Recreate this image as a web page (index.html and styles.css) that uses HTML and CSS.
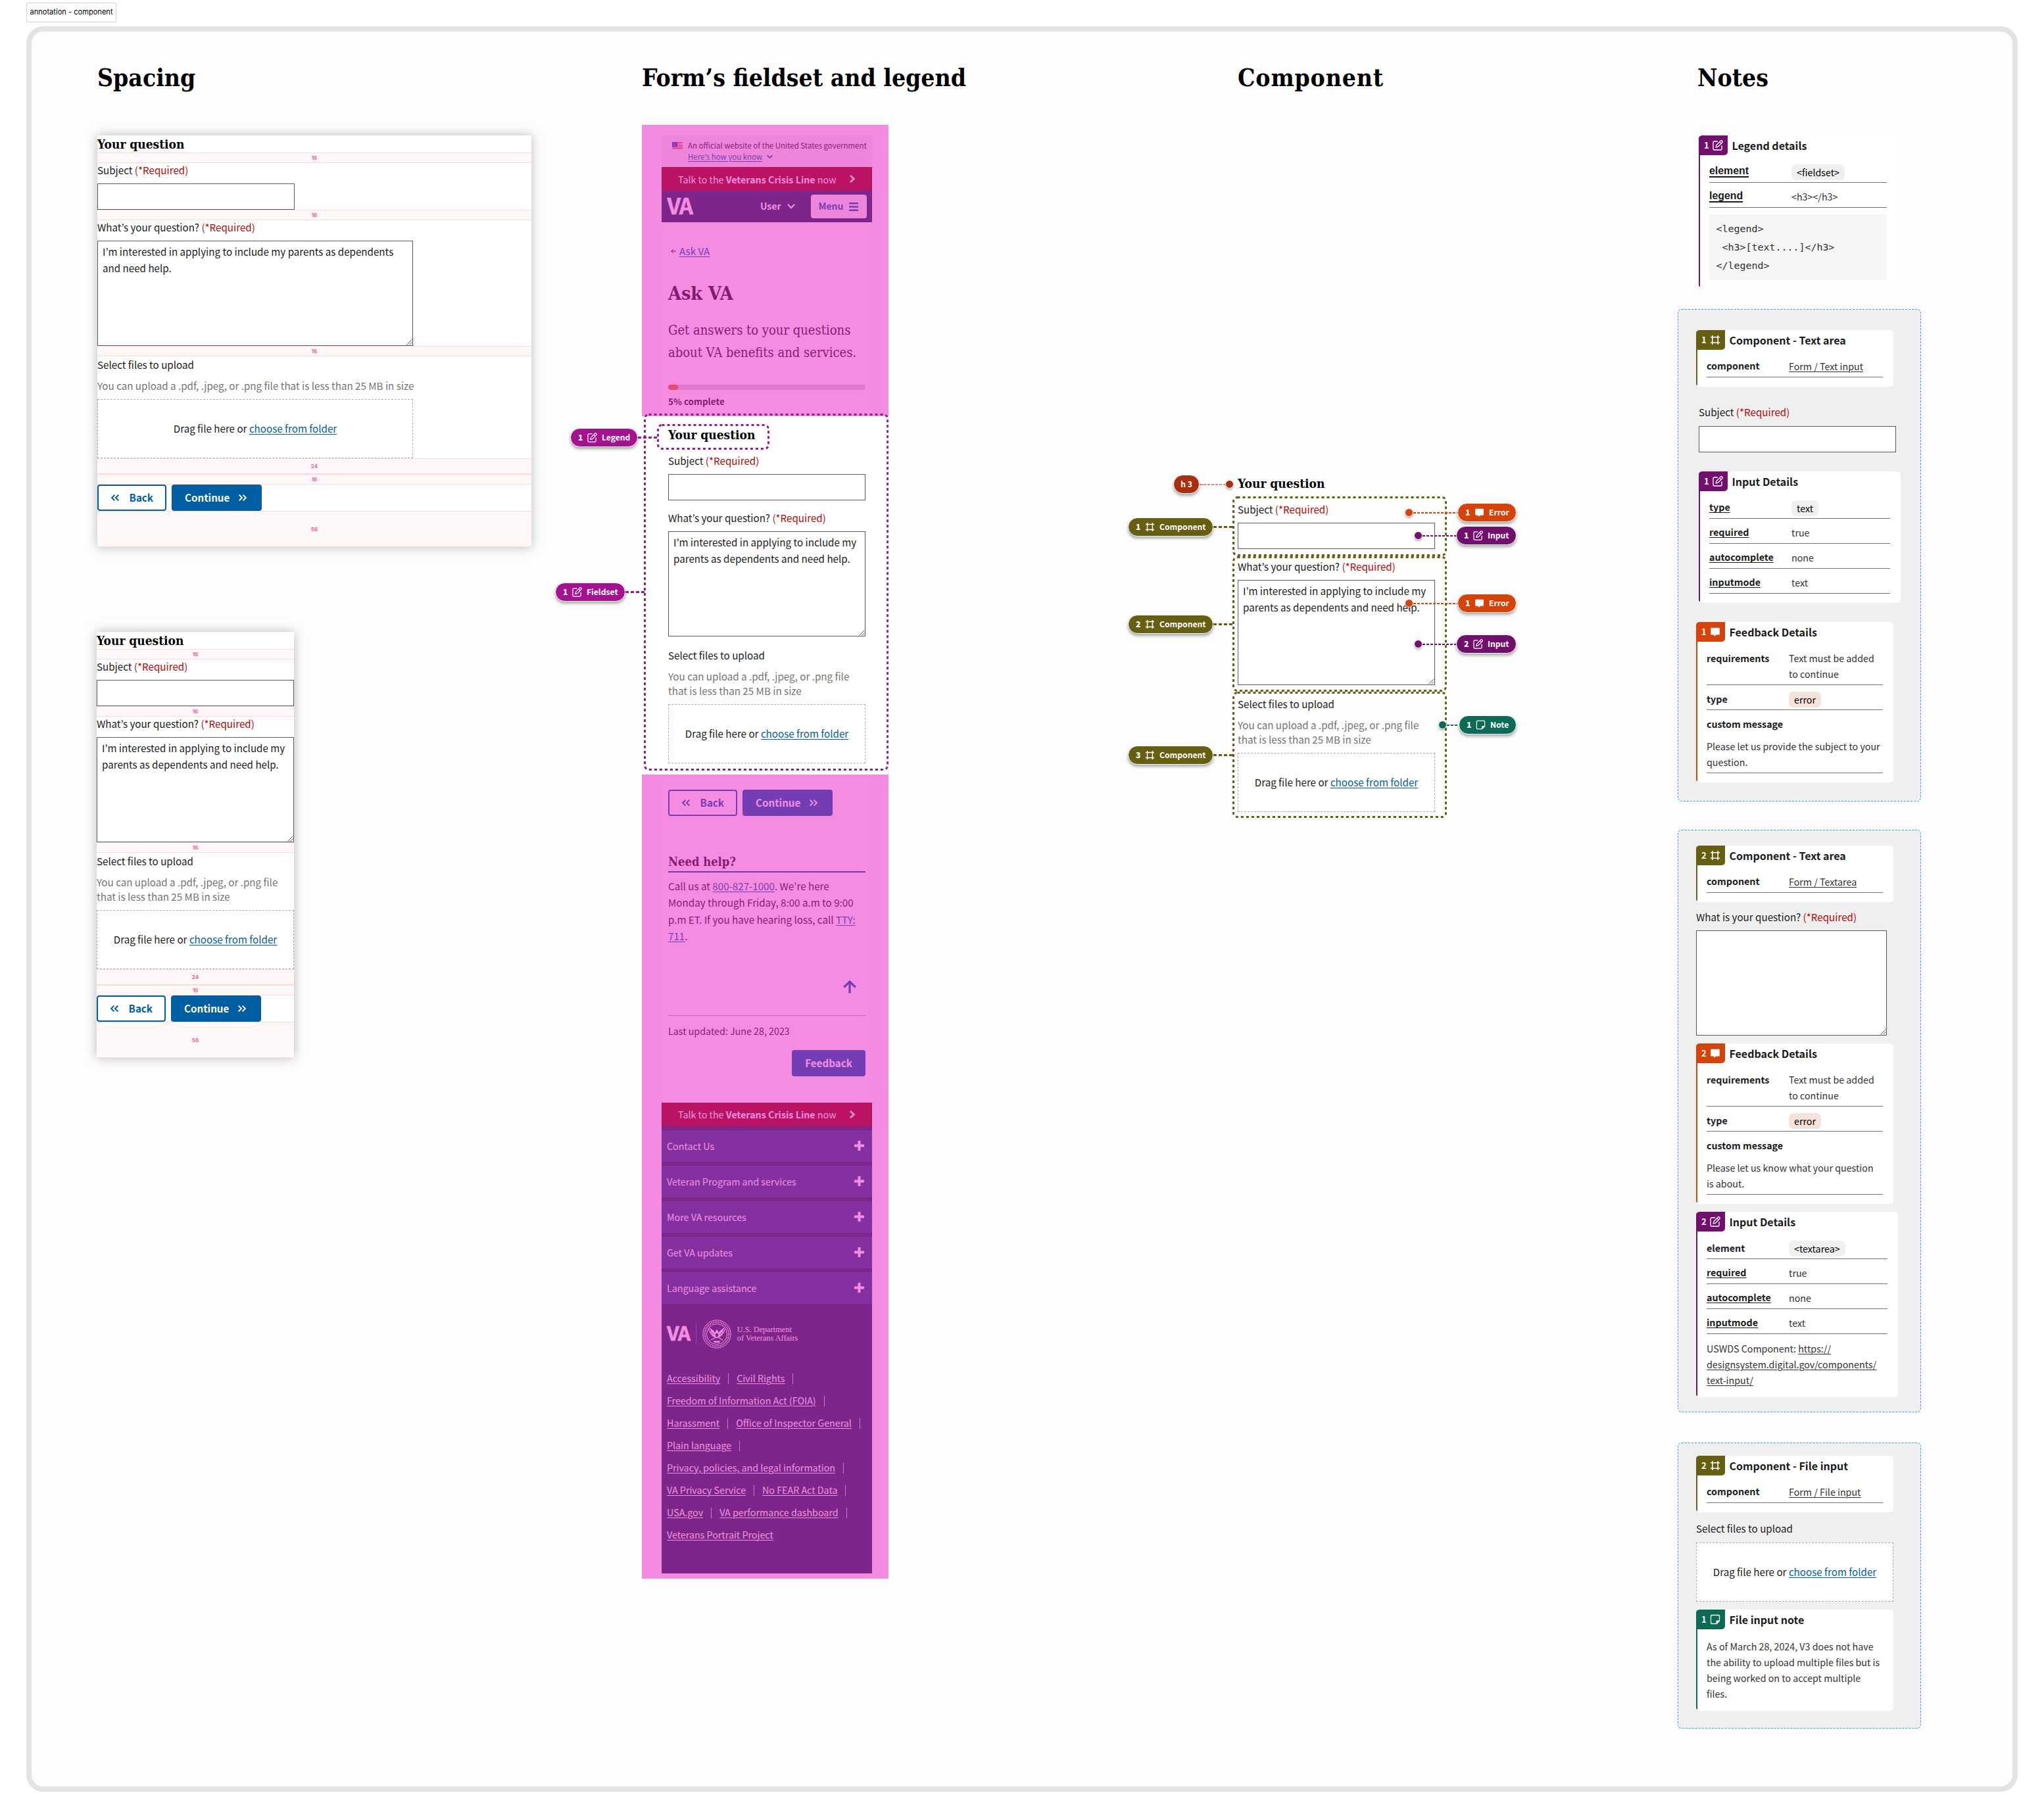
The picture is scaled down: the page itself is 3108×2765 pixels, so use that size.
FILE: index.html
```
<!DOCTYPE html>
<html lang="en">
<head>
<meta charset="utf-8">
<title>annotation - component</title>
<link rel="stylesheet" href="styles.css">
</head>
<body>
<svg class="sprite" aria-hidden="true">
  <symbol id="i-edit" viewBox="0 0 16 16"><path fill="none" stroke="currentColor" stroke-width="1.3" stroke-linecap="round" stroke-linejoin="round" d="M7.4 2H2.6A1.6 1.6 0 0 0 1 3.6v9.8A1.6 1.6 0 0 0 2.6 15h9.8a1.6 1.6 0 0 0 1.6-1.6V8.6M12.1 1.4a1.75 1.75 0 0 1 2.5 2.5L8.3 10.2l-3.2.8.8-3.2zM10.6 2.9l2.5 2.5"/></symbol>
  <symbol id="i-frame" viewBox="0 0 16 16"><path fill="none" stroke="currentColor" stroke-width="1.6" d="M3.8 1v14M12.2 1v14M1 3.8h14M1 12.2h14"/></symbol>
  <symbol id="i-comment" viewBox="0 0 16 16"><path fill="currentColor" d="M2.3 1.8h11.4c.7 0 1.1.4 1.1 1.1v8.4c0 .7-.4 1.1-1.1 1.1H9.6l-3.4 2.4v-2.4H2.3c-.7 0-1.1-.4-1.1-1.1V2.9c0-.7.4-1.1 1.1-1.1z"/></symbol>
  <symbol id="i-note" viewBox="0 0 16 16"><path fill="none" stroke="currentColor" stroke-width="1.3" stroke-linejoin="round" d="M2.6 1.5h10.8c.6 0 1.1.5 1.1 1.1v7.6l-4.3 4.3H2.6c-.6 0-1.1-.5-1.1-1.1V2.6c0-.6.5-1.1 1.1-1.1z"/><path fill="currentColor" d="M14.5 9.6h-3.3c-.9 0-1.6.7-1.6 1.6v3.3h.8l4.1-4.1z"/></symbol>
  <symbol id="i-dleft" viewBox="0 0 14 14"><path fill="none" stroke="currentColor" stroke-width="2" d="M6.400 2.600L2.100 7l4.300 4.400M12.300 2.600L8 7l4.300 4.400"/></symbol>
  <symbol id="i-dright" viewBox="0 0 14 14"><path fill="none" stroke="currentColor" stroke-width="2" d="M1.700 2.600L6 7l-4.300 4.400M7.600 2.600L11.900 7l-4.300 4.400"/></symbol>
  <symbol id="i-right" viewBox="0 0 10 14"><path fill="none" stroke="currentColor" stroke-width="2.6" d="M2 2l5.5 5L2 12"/></symbol>
  <symbol id="i-down" viewBox="0 0 12 12"><path fill="none" stroke="currentColor" stroke-width="2.2" stroke-linecap="round" d="M1.5 3.500L6 8.200l4.500-4.700"/></symbol>
  <symbol id="i-plus" viewBox="0 0 15 15"><path fill="currentColor" d="M5.500 0h4v5.500H15v4H9.500V15h-4V9.500H0v-4h5.500z"/></symbol>
  <symbol id="i-grip" viewBox="0 0 9 9"><path fill="none" stroke="#565c65" stroke-width="1" d="M.5 8.500L8.500.5M4.500 8.500l4-4"/></symbol>
</svg>

<div class="frame-tag">annotation - component</div>

<main class="board">

  <section class="col">
    <h2 class="col__title">Spacing</h2>

    <div class="spec spec--wide">
      <h3 class="q-title">Your question</h3>
      <div class="gap">16</div>
      <div class="label">Subject <span class="req">(*Required)</span></div>
      <div class="input"></div>
      <div class="gap">16</div>
      <div class="label">What’s your question? <span class="req">(*Required)</span></div>
      <div class="area">I’m interested in applying to include my parents as dependents and need help.<svg class="grip"><use href="#i-grip"/></svg></div>
      <div class="gap">16</div>
      <div class="upload">
        <div class="upload__label">Select files to upload</div>
        <div class="upload__hint">You can upload a .pdf, .jpeg, or .png file that is less than 25 MB in size</div>
      </div>
      <div class="drop"><span>Drag file here or <a>choose from folder</a></span></div>
      <div class="gap gap--24">24</div>
      <div class="gap">16</div>
      <div class="actions">
        <span class="btn btn--outline"><svg><use href="#i-dleft"/></svg>Back</span>
        <span class="btn btn--next">Continue<svg><use href="#i-dright"/></svg></span>
      </div>
      <div class="gap gap--56">56</div>
    </div>

    <div class="spec spec--narrow">
      <h3 class="q-title">Your question</h3>
      <div class="gap">16</div>
      <div class="label">Subject <span class="req">(*Required)</span></div>
      <div class="input"></div>
      <div class="gap">16</div>
      <div class="label">What’s your question? <span class="req">(*Required)</span></div>
      <div class="area">I’m interested in applying to include my parents as dependents and need help.<svg class="grip"><use href="#i-grip"/></svg></div>
      <div class="gap">16</div>
      <div class="upload">
        <div class="upload__label">Select files to upload</div>
        <div class="upload__hint">You can upload a .pdf, .jpeg, or .png file that is less than 25 MB in size</div>
      </div>
      <div class="drop"><span>Drag file here or <a>choose from folder</a></span></div>
      <div class="gap gap--24">24</div>
      <div class="gap">16</div>
      <div class="actions">
        <span class="btn btn--outline"><svg><use href="#i-dleft"/></svg>Back</span>
        <span class="btn btn--next">Continue<svg><use href="#i-dright"/></svg></span>
      </div>
      <div class="gap gap--56">56</div>
    </div>
  </section>

  <section class="col">
    <h2 class="col__title">Form’s fieldset and legend</h2>

    <div class="mock">
      <div class="veil veil--top">
        <div class="phone">
          <div class="gov">
            <svg class="gov__flag" viewBox="0 0 16 12"><path fill="#fff" d="M0 0h16v12H0z"/><path stroke="#db3e1f" stroke-width="1.2" d="M0 .6h16M0 3h16M0 5.4h16M0 7.800h16M0 10.200h16"/><path fill="#1e33b1" d="M0 0h8v7H0z"/><path stroke="#fff" stroke-width=".7" stroke-dasharray="1 1" d="M1 1.500h6M1.500 3.500h6M1 5.500h6"/></svg>
            <div>An official website of the United States government<br><a>Here’s how you know</a><svg class="gov__chev"><use href="#i-down"/></svg></div>
          </div>
          <div class="crisis"><span>Talk to the <b>Veterans Crisis Line</b> now</span><svg><use href="#i-right"/></svg></div>
          <div class="va-bar">
            <span class="va">VA</span>
            <span class="va-bar__user">User<svg><use href="#i-down"/></svg></span>
            <span class="va-bar__menu">Menu<svg viewBox="0 0 14 13"><path stroke="currentColor" stroke-width="2.4" d="M0 1.200h14M0 6.500h14M0 11.800h14"/></svg></span>
          </div>
          <div class="intro">
            <div class="back"><svg viewBox="0 0 8 8"><path fill="none" stroke="currentColor" stroke-width="1" d="M8 4H.8M3.800 1L.8 4l3 3"/></svg><a>Ask VA</a></div>
            <h1 class="intro__title">Ask VA</h1>
            <p class="intro__text">Get answers to your questions<br>about VA benefits and services.</p>
            <div class="progress"><div class="progress__bar"></div></div>
            <div class="progress__label">5% complete</div>
          </div>
        </div>
      </div>

      <div class="mock__form">
        <h3 class="q-title">Your question</h3>
        <div class="gap"></div>
        <div class="label">Subject <span class="req">(*Required)</span></div>
        <div class="input"></div>
        <div class="gap"></div>
        <div class="label">What’s your question? <span class="req">(*Required)</span></div>
        <div class="area">I’m interested in applying to include my parents as dependents and need help.<svg class="grip"><use href="#i-grip"/></svg></div>
        <div class="gap"></div>
        <div class="upload">
          <div class="upload__label">Select files to upload</div>
          <div class="upload__hint">You can upload a .pdf, .jpeg, or .png file that is less than 25 MB in size</div>
        </div>
        <div class="drop"><span>Drag file here or <a>choose from folder</a></span></div>
      </div>

      <div class="veil veil--bottom">
        <div class="phone">
          <div class="help">
            <div class="actions">
              <span class="btn btn--outline"><svg><use href="#i-dleft"/></svg>Back</span>
              <span class="btn btn--next">Continue<svg><use href="#i-dright"/></svg></span>
            </div>
            <h3 class="help__title">Need help?</h3>
            <p class="help__text">Call us at <a>800-827-1000</a>. We're here Monday through Friday, 8:00 a.m to 9:00 p.m ET. If you have hearing loss, call <a>TTY: 711</a>.</p>
            <svg class="help__up" viewBox="0 0 20 20"><path fill="none" stroke="currentColor" stroke-width="3.200" d="M10 19.500V2.500M1.200 10.500L10 2l8.800 8.500"/></svg>
            <div class="help__date">Last updated: June 28, 2023</div>
            <span class="btn help__feedback">Feedback</span>
          </div>
          <div class="crisis crisis--foot"><span>Talk to the <b>Veterans Crisis Line</b> now</span><svg><use href="#i-right"/></svg></div>
          <footer class="foot">
            <div class="foot__row">Contact Us<svg><use href="#i-plus"/></svg></div>
            <div class="foot__row">Veteran Program and services<svg><use href="#i-plus"/></svg></div>
            <div class="foot__row">More VA resources<svg><use href="#i-plus"/></svg></div>
            <div class="foot__row">Get VA updates<svg><use href="#i-plus"/></svg></div>
            <div class="foot__row">Language assistance<svg><use href="#i-plus"/></svg></div>
            <div class="foot__logo">
              <span class="va va--foot">VA</span>
              <svg class="seal" viewBox="0 0 44 44"><g fill="none" stroke="#fff"><circle cx="22" cy="22" r="21.200" stroke-width="1"/><circle cx="22" cy="22" r="18.300" stroke-width="2.400" stroke-dasharray="1.200 1.300"/><circle cx="22" cy="22" r="15.500" stroke-width="1"/><path stroke-width="1.100" d="M9.500 14.500c2 6 5 9.500 9 12M34.500 14.500c-2 6-5 9.500-9 12M12.500 17c2 4.500 4 7 7 9M31.500 17c-2 4.500-4 7-7 9M13 31l17-9M31 31l-17-9"/></g><path fill="#fff" d="M10 12c4 2 7 4.500 9.500 8l1-3.500c.6-1.500 2.400-1.500 3 0l1 3.500c2.500-3.500 5.500-6 9.500-8-2 3.500-4.500 7.500-8 11l-1.500 5h-5L18 23c-3.500-3.500-6-7.500-8-11zM16.500 32.500h11l-2 2.500h-7z"/><path fill="#112e51" d="M20 21h4v4l-2 2-2-2z"/></svg>
              <span class="foot__dept">U.S. Department<br>of Veterans Affairs</span>
            </div>
            <div class="foot__links">
              <div><a>Accessibility</a><i></i><a>Civil Rights</a><i></i></div>
              <div><a>Freedom of Information Act (FOIA)</a><i></i></div>
              <div><a>Harassment</a><i></i><a>Office of Inspector General</a><i></i></div>
              <div><a>Plain language</a><i></i></div>
              <div><a>Privacy, policies, and legal information</a><i></i></div>
              <div><a>VA Privacy Service</a><i></i><a>No FEAR Act Data</a><i></i></div>
              <div><a>USA.gov</a><i></i><a>VA performance dashboard</a><i></i></div>
              <div><a>Veterans Portrait Project</a></div>
            </div>
          </footer>
        </div>
      </div>

      <svg class="outline outline--fieldset"><rect/></svg>
      <svg class="outline outline--legend"><rect/></svg>
      <div class="pin pin--fs pin--legend"><span class="pill"><b>1</b><svg><use href="#i-edit"/></svg>Legend</span><span class="wire"></span></div>
      <div class="pin pin--fs pin--fieldset"><span class="pill"><b>1</b><svg><use href="#i-edit"/></svg>Fieldset</span><span class="wire"></span></div>
    </div>
  </section>

  <section class="col">
    <h2 class="col__title col__title--loose">Component</h2>

    <div class="comp">
      <h3 class="q-title">Your question</h3>
      <div class="gap"></div>
      <div class="label">Subject <span class="req">(*Required)</span></div>
      <div class="input"></div>
      <div class="gap"></div>
      <div class="label">What’s your question? <span class="req">(*Required)</span></div>
      <div class="area">I’m interested in applying to include my parents as dependents and need help.<svg class="grip"><use href="#i-grip"/></svg></div>
      <div class="gap"></div>
      <div class="upload">
        <div class="upload__label">Select files to upload</div>
        <div class="upload__hint">You can upload a .pdf, .jpeg, or .png file that is less than 25 MB in size</div>
      </div>
      <div class="drop"><span>Drag file here or <a>choose from folder</a></span></div>

      <svg class="outline outline--c1"><rect/></svg>
      <svg class="outline outline--c2"><rect/></svg>
      <svg class="outline outline--c3"><rect/></svg>

      <div class="pin pin--h3"><span class="pill">h 3</span><span class="wire"></span><span class="dot"></span></div>
      <div class="pin pin--comp pin--comp1"><span class="pill"><b>1</b><svg><use href="#i-frame"/></svg>Component</span><span class="wire"></span></div>
      <div class="pin pin--comp pin--comp2"><span class="pill"><b>2</b><svg><use href="#i-frame"/></svg>Component</span><span class="wire"></span></div>
      <div class="pin pin--comp pin--comp3"><span class="pill"><b>3</b><svg><use href="#i-frame"/></svg>Component</span><span class="wire"></span></div>
      <div class="pin pin--error pin--error1"><span class="dot"></span><span class="wire"></span><span class="pill"><b>1</b><svg><use href="#i-comment"/></svg>Error</span></div>
      <div class="pin pin--input pin--input1"><span class="dot"></span><span class="wire"></span><span class="pill"><b>1</b><svg><use href="#i-edit"/></svg>Input</span></div>
      <div class="pin pin--error pin--error2"><span class="dot"></span><span class="wire"></span><span class="pill"><b>1</b><svg><use href="#i-comment"/></svg>Error</span></div>
      <div class="pin pin--input pin--input2"><span class="dot"></span><span class="wire"></span><span class="pill"><b>2</b><svg><use href="#i-edit"/></svg>Input</span></div>
      <div class="pin pin--note"><span class="dot"></span><span class="wire"></span><span class="pill"><b>1</b><svg><use href="#i-note"/></svg>Note</span></div>
    </div>
  </section>

  <section class="col col--notes">
    <h2 class="col__title">Notes</h2>

    <article class="card card--input card--legend">
      <header class="card__head"><span class="card__tag">1<svg><use href="#i-edit"/></svg></span>Legend details</header>
      <div class="row row--alt"><u>element</u><span><em>&lt;fieldset&gt;</em></span></div>
      <div class="row row--alt"><u>legend</u><span>&lt;h3&gt;&lt;/h3&gt;</span></div>
      <pre class="code">&lt;legend&gt;
 &lt;h3&gt;[text....]&lt;/h3&gt;
&lt;/legend&gt;</pre>
    </article>

    <div class="group group--1">
      <article class="card card--comp">
        <header class="card__head"><span class="card__tag">1<svg><use href="#i-frame"/></svg></span>Component - Text area</header>
        <div class="row"><strong class="up">component</strong><span><a>Form / Text input</a></span></div>
      </article>
      <div class="sample sample--subject">
        <div class="label">Subject <span class="req">(*Required)</span></div>
        <div class="input"></div>
      </div>
      <article class="card card--input card--wide card--inset">
        <header class="card__head"><span class="card__tag">1<svg><use href="#i-edit"/></svg></span>Input Details</header>
        <div class="row"><u>type</u><span><em>text</em></span></div>
        <div class="row"><u>required</u><span>true</span></div>
        <div class="row"><u>autocomplete</u><span>none</span></div>
        <div class="row"><u>inputmode</u><span>text</span></div>
      </article>
      <article class="card card--error">
        <header class="card__head"><span class="card__tag">1<svg><use href="#i-comment"/></svg></span>Feedback Details</header>
        <div class="row"><strong>requirements</strong><span>Text must be added to continue</span></div>
        <div class="row"><strong>type</strong><span><em>error</em></span></div>
        <div class="message"><strong>custom message</strong><p>Please let us provide the subject to your question.</p></div>
      </article>
    </div>

    <div class="group group--2">
      <article class="card card--comp">
        <header class="card__head"><span class="card__tag">2<svg><use href="#i-frame"/></svg></span>Component - Text area</header>
        <div class="row"><strong class="up">component</strong><span><a>Form / Textarea</a></span></div>
      </article>
      <div class="sample sample--question">
        <div class="label">What is your question? <span class="req">(*Required)</span></div>
        <div class="area"><svg class="grip"><use href="#i-grip"/></svg></div>
      </div>
      <article class="card card--error">
        <header class="card__head"><span class="card__tag">2<svg><use href="#i-comment"/></svg></span>Feedback Details</header>
        <div class="row"><strong>requirements</strong><span>Text must be added to continue</span></div>
        <div class="row"><strong>type</strong><span><em>error</em></span></div>
        <div class="message"><strong>custom message</strong><p>Please let us know what your question<br>is about.</p></div>
      </article>
      <article class="card card--input card--wide">
        <header class="card__head"><span class="card__tag">2<svg><use href="#i-edit"/></svg></span>Input Details</header>
        <div class="row"><strong>element</strong><span><em>&lt;textarea&gt;</em></span></div>
        <div class="row"><u>required</u><span>true</span></div>
        <div class="row"><u>autocomplete</u><span>none</span></div>
        <div class="row"><u>inputmode</u><span>text</span></div>
        <p class="card__text">USWDS Component: <a>https://<br>designsystem.digital.gov/components/<br>text-input/</a></p>
      </article>
    </div>

    <div class="group group--3">
      <article class="card card--comp">
        <header class="card__head"><span class="card__tag">2<svg><use href="#i-frame"/></svg></span>Component - File input</header>
        <div class="row"><strong class="up">component</strong><span><a>Form / File input</a></span></div>
      </article>
      <div class="sample sample--file">
        <div class="label">Select files to upload</div>
        <div class="drop"><span>Drag file here or <a>choose from folder</a></span></div>
      </div>
      <article class="card card--note">
        <header class="card__head"><span class="card__tag">1<svg><use href="#i-note"/></svg></span>File input note</header>
        <p class="card__text">As of March 28, 2024, V3 does not have the ability to upload multiple files but is being worked on to accept multiple files.</p>
      </article>
    </div>
  </section>
</main>
</body>
</html>
```
FILE: styles.css
```
:root {
  --sans: "Noto Sans CJK KR", "Noto Sans", sans-serif;
  --slab: "DejaVu Serif Condensed", "DejaVu Serif", serif;
  --ink: #1b1b1b;
  --link: #005ea2;
  --navy: #112e51;
}

* { box-sizing: border-box; }

body {
  margin: 0;
  background: #fff;
  color: var(--ink);
  font: 15.16px/25.4px var(--sans);
}

h1, h2, h3, p, pre { margin: 0; }
a { text-decoration: underline; text-decoration-thickness: 1px; text-underline-offset: 2px; }
.sprite { position: absolute; width: 0; height: 0; }

.frame-tag {
  width: 137px;
  height: 30px;
  margin: 4px 0 6px 40px;
  border: 1px solid #d2d2d2;
  border-radius: 2px;
  font: 11.1px/27px "Inter", sans-serif;
  color: #000;
  text-align: center;
}

.board {
  display: grid;
  grid-template-columns: 828px 906px 669px 370px;
  align-items: start;
  width: 3028px;
  height: 2685px;
  margin-left: 40px;
  padding: 48px 0 0 100px;
  border: 8px solid #e3e3e3;
  border-radius: 26px;
  background: #fdfdfd;
}

.col__title {
  padding-bottom: 3px;
  font: 700 37px/45px var(--slab);
  color: #000;
}
.col__title--loose { letter-spacing: .85px; }
.col--notes .col__title { padding-left: 30px; }

/* Form pieces shared by every example */
.q-title {
  font: 700 19px/26px var(--slab);
  color: #000;
}
.gap { height: 16px; }
.label { height: 31px; line-height: 21px; }
.req { color: #b50909; }
.input {
  width: 300px;
  height: 40px;
  border: 1px solid #565c65;
  background: #fff;
}
.area {
  position: relative;
  width: 300px;
  height: 160px;
  padding: 3px 7px;
  border: 1px solid #565c65;
  background: #fff;
}
.grip { position: absolute; right: 0; bottom: 0; width: 9px; height: 9px; }
.upload__label { line-height: 25px; }
.upload__hint { padding: 8px 0 10px; line-height: 22px; color: #757575; }
.drop {
  display: flex;
  align-items: center;
  justify-content: center;
  width: 300px;
  height: 90px;
  border: 1px dashed #a9aeb1;
  background: #fff;
}
.drop a { color: var(--link); }

.actions { display: flex; gap: 8px; height: 40px; }
.btn {
  display: flex;
  align-items: center;
  justify-content: space-between;
  width: 137px;
  height: 40px;
  padding: 0 22px 0 20px;
  border-radius: 4px;
  background: var(--link);
  color: #fff;
  font-weight: 700;
}
.btn svg { width: 14px; height: 14px; }
.btn--outline {
  width: 105px;
  padding: 0 18px 0 18px;
  border: 2px solid var(--link);
  background: #fff;
  color: var(--link);
}

/* Spacing panels */
.spec {
  background: #fff;
  box-shadow: 0 0 16px rgba(0, 0, 0, .27);
}
.spec .gap {
  display: flex;
  align-items: center;
  justify-content: center;
  border: solid #fbd9dc;
  border-width: 1px 0;
  background: #fff8f8;
  color: #ec5f9b;
  font: 700 8px/10px "Inter", sans-serif;
}
.spec .gap--24 { height: 24px; }
.spec .gap--56 { height: 55px; }
.spec--wide { width: 660px; margin-top: 62px; }
.spec--wide .area, .spec--wide .drop { width: 480px; }
.spec--narrow { width: 300px; margin: 129px 0 0 -1px; }

/* Mobile page with everything outside the fieldset tinted */
.mock { position: relative; width: 375px; margin-top: 46px; }
.veil { position: relative; padding: 16px 25px 0 30px; }
.veil::after {
  content: "";
  position: absolute;
  inset: 0;
  background: rgba(233, 27, 197, .5);
}
.veil--top { height: 443px; }
.veil--bottom { height: 1223px; padding-top: 0; }
.phone { background: #fff; }
.veil--top .phone { height: 427px; }
.veil--bottom .phone { height: 1215px; }

.gov {
  display: flex;
  gap: 8px;
  height: 48px;
  padding: 7px 0 0 16px;
  background: #f0f0f0;
  font-size: 11.46px;
  line-height: 16.5px;
  white-space: nowrap;
}
.gov__flag { width: 16px; height: 12px; margin-top: 3px; flex: none; }
.gov a { color: var(--link); }
.gov__chev { width: 9px; height: 9px; margin-left: 7px; color: var(--link); }

.crisis {
  display: flex;
  align-items: center;
  height: 36px;
  padding: 1px 0 0 25px;
  background: #8b0a03;
  color: #fff;
  font-size: 14.27px;
  white-space: nowrap;
}
.crisis svg { width: 10px; height: 14px; margin-left: 19px; margin-top: -1px; }

.va-bar {
  display: flex;
  align-items: center;
  height: 48px;
  padding: 0 8.5px 0 8.5px;
  background: var(--navy);
  color: #fff;
  font-size: 14px;
  font-weight: 700;
}
.va {
  font: 700 33px/33px var(--sans);
  letter-spacing: -1.5px;
  -webkit-text-stroke: .6px #fff;
}
.va-bar .va { margin-top: -3px; }
.va-bar__user { display: flex; align-items: center; gap: 9px; margin-left: auto; }
.va-bar__user svg { width: 12px; height: 12px; }
.va-bar__menu {
  display: flex;
  align-items: center;
  gap: 9px;
  width: 85px;
  height: 36px;
  margin-left: 24px;
  padding-left: 12px;
  border-radius: 4px;
  background: #f0f0f0;
  color: var(--link);
}
.va-bar__menu svg { width: 14px; height: 13px; }

.intro { padding: 31px 10px 0; }
.back { display: flex; align-items: center; gap: 5px; height: 25px; padding-left: 4px; }
.back svg { width: 8px; height: 8px; }
.back a { color: var(--link); }
.intro__title { margin-top: 34px; font: 700 28.5px/36px var(--slab); }
.intro__text { margin-top: 21px; font: 20px/34px var(--slab); white-space: nowrap; }
.progress { height: 8px; margin-top: 32px; border-radius: 4px; background: #d6d7d9; }
.progress__bar { width: 15px; height: 8px; border-radius: 4px; background: #e77a16; }
.progress__label { margin-top: 7px; font-size: 13.44px; line-height: 20px; font-weight: 700; }

.mock__form { height: 545px; padding: 15px 35px 0 40px; background: #fff; }

.help { padding: 23px 10px 0; }
.help__title {
  margin-top: 58px;
  padding-bottom: 2px;
  border-bottom: 2px solid var(--link);
  font: 700 18.3px/24px var(--slab);
}
.help__text { margin-top: 8px; }
.help__text a { color: var(--link); }
.help__up { display: block; width: 20px; height: 20px; margin: 54px 14px 33px auto; color: var(--link); }
.help__date {
  padding-top: 11px;
  border-top: 1px solid #a9aeb1;
  font-size: 14.27px;
  line-height: 24px;
}
.help__feedback { width: 112px; justify-content: center; margin: 17px 0 0 auto; padding: 0; }

.crisis--foot { margin-top: 40px; }
.foot {
  display: flex;
  flex-direction: column;
  gap: 6px;
  height: 680px;
  padding-top: 6px;
  background: var(--navy);
  color: #fff;
  font-size: 14.27px;
}
.foot__row {
  display: flex;
  align-items: center;
  justify-content: space-between;
  height: 48px;
  padding: 0 12px 0 8px;
  background: #1f457b;
}
.foot__row svg { width: 15px; height: 15px; }
.foot__logo { display: flex; align-items: center; height: 44px; margin-top: 18px; padding-left: 8px; }
.va--foot {
  height: 31px;
  padding-right: 9px;
  border-right: 1px solid rgba(255, 255, 255, .3);
  font: 700 30px/27px var(--sans);
  letter-spacing: -1.2px;
}
.seal { width: 44px; height: 44px; margin: 0 9px 0 9px; }
.foot__dept { font: 12.3px/12.7px "Liberation Serif", serif; white-space: nowrap; }
.foot__links { margin-top: 22px; padding-left: 8px; line-height: 34px; white-space: nowrap; }
.foot__links div { display: flex; align-items: center; height: 34px; }
.foot__links i { width: 1px; height: 16px; margin: 2px 12px 0; background: rgba(255, 255, 255, .75); }

/* Annotation outlines */
.outline { position: absolute; overflow: visible; color: #961b8d; }
.outline rect {
  x: 1.5px;
  y: 1.5px;
  width: calc(100% - 3px);
  height: calc(100% - 3px);
  rx: 6px;
  fill: none;
  stroke: currentColor;
  stroke-width: 3px;
  stroke-dasharray: 4 4;
}
.outline--fieldset { left: 3px; top: 439px; width: 372px; height: 543px; }
.outline--legend { left: 23px; top: 455px; width: 171px; height: 39px; }
.comp .outline { left: -8px; width: 326px; color: #665e10; }
.comp .outline--c1 { top: 33px; height: 91px; }
.comp .outline--c2 { top: 124px; height: 206px; }
.comp .outline--c3 { top: 330px; height: 192px; }

/* Annotation pins: pill, connector and optional end dot */
.comp { position: relative; width: 300px; margin-top: 578px; }
.pin { position: absolute; display: flex; align-items: center; height: 29px; }
.pill {
  flex: none;
  display: flex;
  align-items: center;
  height: 29px;
  padding: 0 0 1px 11px;
  border: 1px solid #fff;
  border-radius: 15px;
  background: var(--pin);
  box-shadow: 0 3px 4px rgba(0, 0, 0, .33);
  color: #fff;
  font-size: 12.15px;
  font-weight: 700;
  line-height: 24px;
  white-space: nowrap;
}
.pill b { width: 7px; }
.pill svg { flex: none; width: 15px; height: 15px; margin: 0 7px; }
.wire {
  flex: 1;
  height: 2px;
  background: repeating-linear-gradient(90deg, var(--pin) 0 4.5px, transparent 4.5px 6px);
}
.dot {
  flex: none;
  width: 13px;
  height: 13px;
  border: 1px solid #fff;
  border-radius: 50%;
  background: var(--pin);
  box-shadow: 0 2px 3px rgba(0, 0, 0, .3);
}
.pin--fs { --pin: #a4128f; }
.pin--comp { --pin: #665e10; left: -167px; width: 162px; }
.pin--fs .wire, .pin--comp .wire {
  height: 3px;
  background: repeating-linear-gradient(90deg, var(--pin) 0 5px, transparent 5px 8px);
}
.pin--legend { left: -109px; top: 461px; width: 133px; }
.pin--fieldset { left: -132px; top: 696px; width: 136px; }
.pin--legend .pill { width: 103px; }
.pin--fieldset .pill { width: 107px; }
.pin--comp .pill { width: 130px; }
.pin--comp1 { top: 65px; }
.pin--comp2 { top: 213px; }
.pin--comp3 { top: 412px; }
.pin--h3 { --pin: #a72f10; left: -98px; top: 0; width: 92px; }
.pin--h3 .wire { opacity: .55; }
.pin--h3 .pill { width: 40px; justify-content: center; padding: 0 0 1px; }
.pin--error { --pin: #d54309; left: 254px; width: 170px; }
.pin--error .pill { width: 90px; }
.pin--error1 { top: 43px; }
.pin--error2 { top: 181px; }
.pin--input { --pin: #720f6d; left: 268px; width: 156px; }
.pin--input .pill { width: 92px; }
.pin--input1 { top: 78px; }
.pin--input2 { top: 243px; }
.pin--note { --pin: #0b6b56; left: 305px; top: 366px; width: 119px; }
.pin--note .pill { width: 88px; }

/* Notes column */
.card {
  position: relative;
  width: 300px;
  padding: 0 16px 14px;
  border-radius: 5px;
  background: #fff;
  font-size: 14.27px;
  line-height: 24px;
  overflow: hidden;
}
.card::before {
  content: "";
  position: absolute;
  left: 0;
  top: 0;
  bottom: 2px;
  width: 2px;
  background: var(--tone);
}
.card--wide { width: 307px; }
.card--input { --tone: #720f6d; }
.card--comp { --tone: #665e10; }
.card--error { --tone: #d54309; }
.card--note { --tone: #0b6b56; }
.card__head {
  display: flex;
  align-items: center;
  gap: 6.5px;
  height: 30px;
  margin: 0 -16px 4px;
  font-size: 16px;
  font-weight: 700;
  white-space: nowrap;
}
.card__tag {
  display: flex;
  align-items: center;
  gap: 5px;
  width: 44px;
  height: 30px;
  padding-left: 8px;
  border-radius: 5px 0 5px 0;
  background: var(--tone);
  color: #fff;
  font-size: 13px;
}
.card__tag svg { width: 16px; height: 16px; flex: none; }
.row {
  display: grid;
  grid-template-columns: 125px 1fr;
  min-height: 38px;
  padding: 9px 0 4px;
  border-bottom: 1px solid #71767a;
}
.row span { color: #323232; }
.row strong { font-weight: 700; }
.row u, .row .up { margin-top: -1px; font-weight: 700; }
.row u { text-decoration-thickness: 1px; text-underline-offset: 2px; text-decoration-skip-ink: none; }
.row--alt u {
  margin-top: -1px;
  font: 700 15.88px/24px "Liberation Sans", sans-serif;
  text-underline-offset: 3px;
  text-decoration-thickness: 1.5px;
}
.row em {
  display: inline-block;
  height: 24px;
  margin: 1px 0 -1px;
  padding: 0 8px;
  border-radius: 7px;
  background: #f0f0f0;
  color: #000;
  font-style: normal;
  line-height: 23px;
  vertical-align: top;
}
.card--error .row em { background: #f4e3db; }
.message { padding: 9px 0 4px; border-bottom: 1px solid #71767a; }
.message strong { display: block; }
.message p { margin-top: 10px; color: #323232; }
.card__text { margin-top: 10px; color: #323232; }
.card__head + .card__text { margin-top: 14px; }
.card--legend { width: 302px; margin: 62px 0 0 32px; padding-bottom: 12px; }
.code {
  height: 100px;
  margin-top: 10px;
  padding: 8px 10.5px;
  border-radius: 4px;
  background: #f6f6f6;
  font: 14.95px/28px "DejaVu Sans Mono", monospace;
  color: #2e2e2e;
}

.group {
  width: 370px;
  padding-left: 27px;
  border: 1px dashed #22b4c6;
  border-radius: 6px;
  background: #efefef;
}
.group--1 { height: 749px; margin-top: 32px; padding-top: 31px; }
.group--2 { height: 886px; margin-top: 43px; padding-top: 23px; }
.group--3 { height: 435px; margin-top: 46px; padding-top: 19px; }
.group--1 .card--input { margin: 29px 0 29px 4px; }
.group--2 .card--error { margin: 12px 0; }
.sample .label { height: 33px; line-height: 22px; }
.sample--subject { margin: 27px 0 0 4px; }
.sample--question { margin-top: 11px; }
.sample--question .area { width: 290px; margin-top: -1px; }
.sample--file { margin: 13px 0 12px; }
```
